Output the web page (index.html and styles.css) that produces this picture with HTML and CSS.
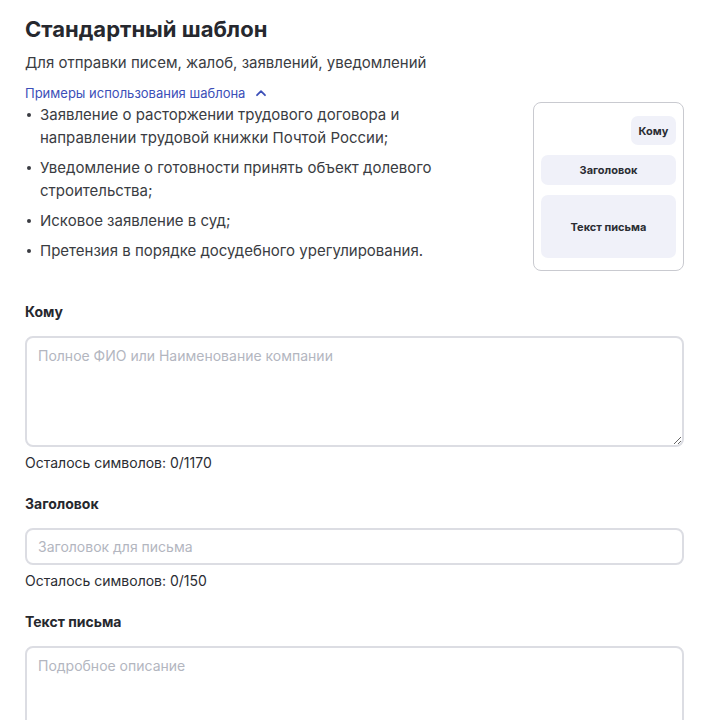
FILE: index.html
```html
<!DOCTYPE html>
<html lang="ru">
<head>
<meta charset="utf-8">
<title>Стандартный шаблон</title>
<link rel="stylesheet" href="styles.css">
</head>
<body>
<main class="page">
  <h1 class="title">Стандартный шаблон</h1>
  <section class="intro">
    <div class="intro-text">
      <p class="subtitle">Для отправки писем, жалоб, заявлений, уведомлений</p>
      <button class="examples-toggle" type="button">
        Примеры использования шаблона
        <svg class="chevron" width="12" height="8" viewBox="0 0 12 8" aria-hidden="true">
          <path d="M2 6.2 L6 2.2 L10 6.2" fill="none" stroke="currentColor" stroke-width="1.8" stroke-linecap="round" stroke-linejoin="round"/>
        </svg>
      </button>
      <ul class="examples">
        <li>Заявление о расторжении трудового договора и направлении трудовой книжки Почтой России;</li>
        <li>Уведомление о готовности принять объект долевого строительства;</li>
        <li>Исковое заявление в суд;</li>
        <li>Претензия в порядке досудебного урегулирования.</li>
      </ul>
    </div>
    <div class="preview">
      <div class="chip chip-to">Кому</div>
      <div class="chip chip-subject">Заголовок</div>
      <div class="chip chip-body">Текст письма</div>
    </div>
  </section>

  <form class="letter-form">
    <div class="field">
      <label class="field-label" for="to">Кому</label>
      <textarea id="to" class="control control-area" placeholder="Полное ФИО или Наименование компании"></textarea>
      <div class="counter">Осталось символов: 0/1170</div>
    </div>
    <div class="field">
      <label class="field-label" for="subject">Заголовок</label>
      <input id="subject" class="control control-input" type="text" placeholder="Заголовок для письма">
      <div class="counter">Осталось символов: 0/150</div>
    </div>
    <div class="field">
      <label class="field-label" for="body">Текст письма</label>
      <textarea id="body" class="control control-area" placeholder="Подробное описание"></textarea>
    </div>
  </form>
</main>
</body>
</html>
```
FILE: styles.css
```css
* {
  box-sizing: border-box;
}

html, body {
  margin: 0;
  background: #ffffff;
}

body {
  font-family: Inter, "Noto Sans", "DejaVu Sans", sans-serif;
  color: #2b2d33;
  overflow: hidden;
}

.page {
  padding: 14px 20px 0 25px;
}

.title {
  margin: 0;
  font-size: 22px;
  line-height: 30px;
  font-weight: 700;
  letter-spacing: 0;
  color: #26282e;
}

.intro {
  display: flex;
  align-items: flex-start;
  justify-content: space-between;
}

.intro-text {
  display: flex;
  flex-direction: column;
  align-items: flex-start;
}

.subtitle {
  margin: 8px 0 0;
  font-size: 15px;
  line-height: 22px;
  color: #3a3c42;
}

.examples-toggle {
  display: flex;
  align-items: center;
  gap: 10px;
  margin-top: 10px;
  padding: 0;
  border: 0;
  background: none;
  font-family: inherit;
  font-size: 13px;
  line-height: 18px;
  color: #3c4fb8;
  cursor: pointer;
}

.chevron {
  color: #3c4fb8;
}

.examples {
  margin: 1px 0 0;
  padding: 0;
  list-style: none;
  width: 435px;
}

.examples li {
  position: relative;
  padding-left: 15px;
  margin-bottom: 7px;
  font-size: 15px;
  line-height: 23px;
  color: #3a3c42;
}

.examples li::before {
  content: "";
  position: absolute;
  left: 2px;
  top: 10px;
  width: 4px;
  height: 4px;
  border-radius: 50%;
  background: #3a3c42;
}

.preview {
  margin-top: 58px;
  width: 151px;
  height: 169px;
  padding: 13px 7px 12px;
  border: 1px solid #c9cad0;
  border-radius: 8px;
  display: flex;
  flex-direction: column;
  align-items: flex-end;
  gap: 10px;
}

.chip {
  display: flex;
  align-items: center;
  justify-content: center;
  border-radius: 7px;
  background: #f0f1f9;
  font-size: 11px;
  font-weight: 700;
  color: #2b2d33;
}

.chip-to {
  width: 45px;
  height: 29px;
}

.chip-subject {
  width: 100%;
  height: 30px;
}

.chip-body {
  width: 100%;
  flex: 1;
}

.letter-form {
  margin-top: 31px;
}

.field {
  margin-bottom: 21px;
}

.field-label {
  display: block;
  font-size: 14px;
  line-height: 20px;
  font-weight: 700;
  color: #26282e;
  margin-bottom: 14px;
}

.control {
  display: block;
  width: 100%;
  border: 2px solid #dcdde3;
  border-radius: 8px;
  background: #ffffff;
  font-family: inherit;
  font-size: 14px;
  color: #2b2d33;
  outline: none;
}

.control::placeholder {
  color: #b3b6bf;
}

.control-area {
  height: 111px;
  padding: 8px 11px;
  line-height: 20px;
  resize: vertical;
}

.control-input {
  height: 37px;
  padding: 0 11px;
}

.counter {
  margin-top: 6px;
  font-size: 14px;
  line-height: 20px;
  color: #2b2d33;
}
```
